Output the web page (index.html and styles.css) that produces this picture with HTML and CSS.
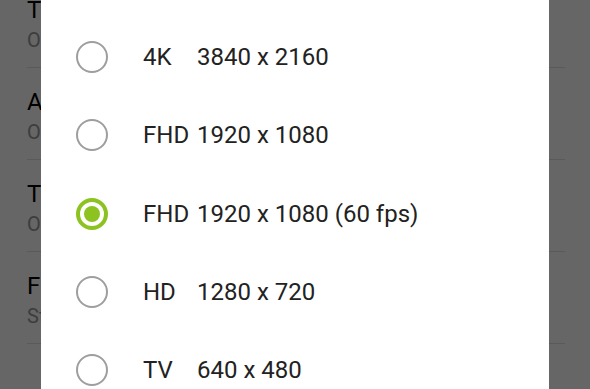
FILE: index.html
```html
<!DOCTYPE html>
<html>
<head>
<meta charset="utf-8">
<link rel="stylesheet" href="styles.css">
</head>
<body>
<div class="settings">
  <div class="item"><div class="title">Timer</div><div class="sub">Off</div></div>
  <div class="item"><div class="title">Auto HDR</div><div class="sub">Off</div></div>
  <div class="item"><div class="title">Tone control</div><div class="sub">Off</div></div>
  <div class="item"><div class="title">Front video size</div><div class="sub">Standard</div></div>
  <div class="item header"><div class="title green">Video</div></div>
</div>
<div class="scrim"></div>
<div class="dialog">
  <div class="option"><span class="radio"></span><span class="label"><span class="tag">4K</span>3840 x 2160</span></div>
  <div class="option"><span class="radio"></span><span class="label"><span class="tag">FHD</span>1920 x 1080</span></div>
  <div class="option"><span class="radio checked"></span><span class="label"><span class="tag">FHD</span>1920 x 1080 (60 fps)</span></div>
  <div class="option"><span class="radio"></span><span class="label"><span class="tag">HD</span>1280 x 720</span></div>
  <div class="option"><span class="radio"></span><span class="label"><span class="tag">TV</span>640 x 480</span></div>
</div>
</body>
</html>
```
FILE: styles.css
```css
html, body {
  margin: 0;
  padding: 0;
  width: 590px;
  height: 389px;
  overflow: hidden;
  background: #fff;
  font-family: Roboto, "Noto Sans", sans-serif;
}
.settings {
  margin-top: -24px;
  padding: 0 25px 0 27px;
}
.item {
  height: 92px;
  padding-top: 20px;
  box-sizing: border-box;
  border-bottom: 1px solid #e0e0e0;
  white-space: nowrap;
}
.item.header {
  border-bottom: none;
  padding-top: 38px;
}
.title {
  font-size: 24px;
  line-height: 28px;
  color: #000;
}
.title.green {
  font-size: 18px;
  color: #5a8a10;
}
.sub {
  margin-top: 4px;
  font-size: 20px;
  line-height: 24px;
  color: #999;
}
.scrim {
  position: fixed;
  inset: 0;
  background: rgba(0, 0, 0, 0.6);
}
.dialog {
  position: fixed;
  left: 41px;
  width: 508px;
  top: -20px;
  bottom: -20px;
  background: #fff;
  padding-top: 38px;
  box-sizing: border-box;
}
.option {
  height: 78.3px;
  display: flex;
  align-items: center;
  padding-left: 35px;
}
.radio {
  width: 32px;
  height: 32px;
  box-sizing: border-box;
  border: 2px solid #9e9e9e;
  border-radius: 50%;
  flex: none;
  display: flex;
  align-items: center;
  justify-content: center;
}
.radio.checked {
  border: 4px solid #8cc320;
}
.radio.checked::after {
  content: "";
  width: 16px;
  height: 16px;
  border-radius: 50%;
  background: #8cc320;
}
.label {
  margin-left: 35px;
  font-size: 24px;
  color: #222;
  white-space: nowrap;
}
.tag {
  display: inline-block;
  width: 54px;
}
```
